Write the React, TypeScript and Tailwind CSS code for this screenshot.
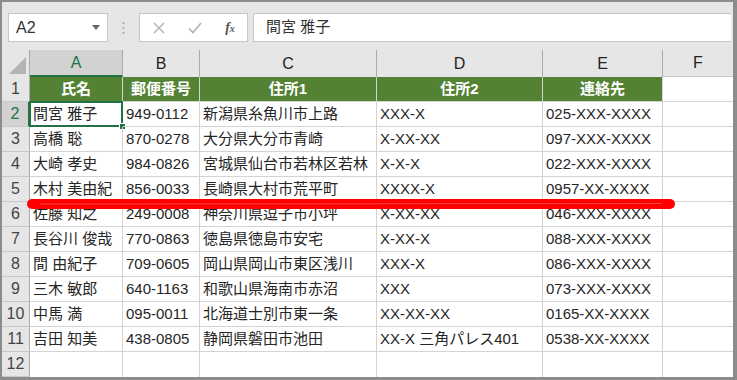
const cols = [
  { key: "A", w: "w-[93px]", title: "氏名" },
  { key: "B", w: "w-[77px]", title: "郵便番号" },
  { key: "C", w: "w-[177px]", title: "住所1" },
  { key: "D", w: "w-[166px]", title: "住所2" },
  { key: "E", w: "w-[120px]", title: "連絡先" },
];

const rows = [
  ["間宮 雅子", "949-0112", "新潟県糸魚川市上路", "XXX-X", "025-XXX-XXXX"],
  ["高橋 聡", "870-0278", "大分県大分市青崎", "X-XX-XX", "097-XXX-XXXX"],
  ["大崎 孝史", "984-0826", "宮城県仙台市若林区若林", "X-X-X", "022-XXX-XXXX"],
  ["木村 美由紀", "856-0033", "長崎県大村市荒平町", "XXXX-X", "0957-XX-XXXX"],
  ["佐藤 知之", "249-0008", "神奈川県逗子市小坪", "X-XX-XX", "046-XXX-XXXX"],
  ["長谷川 俊哉", "770-0863", "徳島県徳島市安宅", "X-XX-X", "088-XXX-XXXX"],
  ["間 由紀子", "709-0605", "岡山県岡山市東区浅川", "XXX-X", "086-XXX-XXXX"],
  ["三木 敏郎", "640-1163", "和歌山県海南市赤沼", "XXX", "073-XXX-XXXX"],
  ["中馬 満", "095-0011", "北海道士別市東一条", "XX-XX-XX", "0165-XX-XXXX"],
  ["吉田 知美", "438-0805", "静岡県磐田市池田", "XX-X 三角パレス401", "0538-XX-XXXX"],
];

const jp = "font-['Liberation_Sans','Noto_Sans_CJK_JP',sans-serif]";

function RowHead({ n, active }: { n: number; active?: boolean }) {
  return (
    <div
      className={
        "flex w-[28px] shrink-0 items-center justify-center border-b border-[#c8c8c8] text-[16px] font-['Liberation_Sans',sans-serif] " +
        (active
          ? "border-r-2 border-r-[#217346] bg-[#d2d2d2] text-[#217346]"
          : "border-r border-r-[#ababab] bg-[#e6e6e6] text-[#444]")
      }
    >
      {n}
    </div>
  );
}

export default function App() {
  return (
    <div className="relative flex h-[380px] w-[737px] flex-col overflow-hidden border-t-2 border-l-2 border-r-4 border-b-[3px] border-[#8c8c8c] bg-[#e6e6e6]">
      {/* formula bar */}
      <div className="flex h-[48px] shrink-0 items-center pl-[6px] pr-[2px] pt-[3px]">
        <div className="flex h-[29px] w-[100px] items-center justify-between border border-[#c6c6c6] bg-white pl-[7px] pr-[7px]">
          <span className="text-[16px] text-[#333] font-['Liberation_Sans',sans-serif]">A2</span>
          <svg width="8" height="5" viewBox="0 0 8 5">
            <path d="M0 0h8L4 5z" fill="#666" />
          </svg>
        </div>
        <div className="flex w-[31px] justify-center">
          <svg width="3" height="12" viewBox="0 0 3 12">
            <rect x="0.5" y="0" width="2" height="2" fill="#b5b5b5" />
            <rect x="0.5" y="5" width="2" height="2" fill="#b5b5b5" />
            <rect x="0.5" y="10" width="2" height="2" fill="#b5b5b5" />
          </svg>
        </div>
        <div className="flex h-[29px] w-[109px] items-center border border-[#c6c6c6] bg-white">
          <div className="flex w-[37px] justify-center">
            <svg width="12" height="12" viewBox="0 0 12 12">
              <path d="M1 1l10 10M11 1L1 11" stroke="#b0b0b0" strokeWidth="1.4" fill="none" />
            </svg>
          </div>
          <div className="flex w-[36px] justify-center">
            <svg width="14" height="12" viewBox="0 0 14 12">
              <path d="M1 6.5l4 4 8-9.5" stroke="#b0b0b0" strokeWidth="1.6" fill="none" />
            </svg>
          </div>
          <div className="flex w-[34px] justify-center">
            <span className="text-[14px] italic font-bold text-[#555] font-['Liberation_Serif',serif]">
              f<span className="text-[10px]">x</span>
            </span>
          </div>
        </div>
        <div className="ml-[5px] flex h-[29px] flex-1 items-center border border-r-0 border-[#c6c6c6] bg-white pl-[12px]">
          <span className={"text-[15px] text-[#333] " + jp}>間宮 雅子</span>
        </div>
      </div>

      {/* column headers */}
      <div className="flex h-[27px] shrink-0">
        <div className="relative w-[28px] shrink-0 border-r border-[#ababab] bg-[#e6e6e6]">
          <svg className="absolute bottom-[3px] right-[3px]" width="17" height="17" viewBox="0 0 17 17">
            <path d="M17 0V17H0z" fill="#b4b4b4" />
          </svg>
        </div>
        {cols.map((c) => (
          <div
            key={c.key}
            className={
              c.w +
              " flex shrink-0 items-center justify-center border-r text-[16px] font-['Liberation_Sans',sans-serif] " +
              (c.key === "A"
                ? "border-[#ababab] border-b-2 border-b-[#217346] bg-[#d2d2d2] text-[#217346]"
                : "border-[#ababab] bg-[#e6e6e6] text-[#222]")
            }
          >
            {c.key}
          </div>
        ))}
        <div className="flex flex-1 items-center justify-center border-b border-[#c8c8c8] text-[16px] text-[#222] font-['Liberation_Sans',sans-serif]">
          F
        </div>
      </div>

      {/* sheet */}
      <div className="flex flex-1 flex-col bg-white">
        <div className="flex h-[25px] shrink-0">
          <RowHead n={1} />
          {cols.map((c) => (
            <div
              key={c.key}
              className={c.w + " flex shrink-0 items-center justify-center border-b border-r border-[#d4d4d4] bg-[#548235] text-[15px] font-bold text-white " + jp}
            >
              {c.title}
            </div>
          ))}
          <div className="flex-1 border-b border-[#d4d4d4]" />
        </div>
        {rows.map((r, i) => (
          <div key={i} className="flex h-[25px] shrink-0">
            <RowHead n={i + 2} active={i === 0} />
            {cols.map((c, j) => (
              <div
                key={c.key}
                className={
                  c.w +
                  " relative flex shrink-0 items-center overflow-visible whitespace-nowrap border-b border-r border-[#d4d4d4] pl-[3px] pt-[1px] text-[15px] text-[#262626] " +
                  jp
                }
              >
                {r[j]}
                {i === 0 && j === 0 && (
                  <>
                    <div className="absolute -left-px -top-px h-[26px] w-[94px] border-2 border-[#217346]" />
                    <div className="absolute -bottom-[4px] -right-[4px] h-[7px] w-[7px] border border-white bg-[#217346]" />
                  </>
                )}
              </div>
            ))}
            <div className="flex-1 border-b border-[#d4d4d4]" />
          </div>
        ))}
        <div className="flex flex-1">
          <RowHead n={12} />
          {cols.map((c) => (
            <div key={c.key} className={c.w + " shrink-0 border-r border-[#d4d4d4]"} />
          ))}
          <div className="flex-1" />
        </div>
      </div>

      {/* red marker line */}
      <svg className="pointer-events-none absolute left-[24px] top-[194px]" width="650" height="16" viewBox="0 0 650 16">
        <path d="M6 8L644 8" stroke="#ff0000" strokeWidth="10" strokeLinecap="round" fill="none" />
        <path d="M14 8L636 7.5" stroke="#ff7070" strokeWidth="1" fill="none" opacity="0.6" />
      </svg>
    </div>
  );
}
